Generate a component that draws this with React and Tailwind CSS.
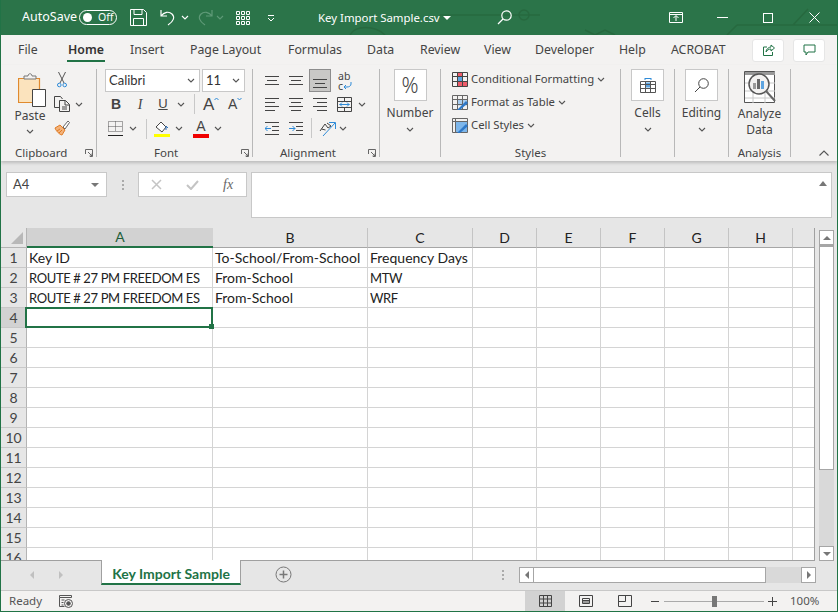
import React from 'react';

const COLS = ['A', 'B', 'C', 'D', 'E', 'F', 'G', 'H', ''];
const ROWS = Array.from({ length: 16 }, (_, i) => i + 1);
const CELLS = {
    1: ['Key ID', 'To-School/From-School', 'Frequency Days'],
    2: ['ROUTE # 27 PM FREEDOM ES', 'From-School', 'MTW'],
    3: ['ROUTE # 27 PM FREEDOM ES', 'From-School', 'WRF'],
};

function Chevron({ color = '#555', className = '' }) {
    return (
        <svg width="8" height="5" viewBox="0 0 8 5" className={className}>
            <path d="M1 1l3 3 3-3" fill="none" stroke={color} strokeWidth="1.1" />
        </svg>
    );
}

function Launcher() {
    return (
        <svg width="8" height="8" viewBox="0 0 8 8">
            <path d="M.5 5V.5h7V7.5H5M3 3l4 4M7 4.5V7H4.5" fill="none" stroke="#666" strokeWidth="1" />
        </svg>
    );
}

// alignment glyphs are just sets of horizontal bars
function Bars({ lines, children }) {
    return (
        <svg width="15" height="16" viewBox="0 0 15 16">
            {lines.map(([a, b, y], i) => (
                <path key={i} d={`M${a} ${y + 0.5}H${b}`} stroke="#444" strokeWidth="1" />
            ))}
            {children}
        </svg>
    );
}

function SaveIcon() {
    return (
        <svg width="17" height="17" viewBox="0 0 17 17" fill="none" stroke="#fff" strokeWidth="1">
            <path d="M.5.5h13l3 3v13H.5z" />
            <path d="M4 .5v5h8v-5M3.5 16.5v-7h10v7" />
        </svg>
    );
}

function UndoIcon({ color = '#fff', flip = false }) {
    return (
        <svg width="16" height="17" viewBox="0 0 16 17" fill="none" stroke={color} strokeWidth="1.2" className={flip ? '-scale-x-100' : ''}>
            <path d="M1 1v6h6M1 7c3-4 8-5 11-2 3 3 2 7-4 11" />
        </svg>
    );
}

function TitleBar() {
    return (
        <div className="relative flex h-[35px] shrink-0 items-center whitespace-nowrap bg-[#2b7449] text-[11.4px] text-white">
            {/* faint circuit pattern behind the title bar */}
            <svg className="absolute inset-0" width="838" height="35" fill="none" stroke="#27693f" strokeWidth="1.5">
                <path d="M440 15h100M737 25h101M727 35l10-10M793 25l15-16M585 30l10 5 10-5 10 5" />
                <circle cx="524" cy="15" r="5" />
                <path d="M350 35c5-10 25-10 35 0" />
            </svg>
            <span className="relative ml-[22px] w-[57px] text-[12.5px]">AutoSave</span>
            <div className="relative flex h-[15px] w-[38px] items-center rounded-full border border-white pl-[3px]">
                <span className="h-[9px] w-[9px] rounded-full bg-white" />
                <span className="ml-[6px] text-[10.5px] leading-none">Off</span>
            </div>
            <div className="relative ml-[13px]"><SaveIcon /></div>
            <div className="relative ml-[13px]"><UndoIcon /></div>
            <Chevron color="#fff" className="relative ml-[5px]" />
            <div className="relative ml-[8px]"><UndoIcon color="#5f9a78" flip /></div>
            <Chevron color="#5f9a78" className="relative ml-[3px]" />
            <svg className="relative ml-[12px]" width="14" height="14" viewBox="0 0 14 14" fill="none" stroke="#fff">
                <path d="M.5.5h3v3h-3zM5.5.5h3v3h-3zM10.5.5h3v3h-3zM.5 5.5h3v3h-3zM5.5 5.5h3v3h-3zM10.5 5.5h3v3h-3zM.5 10.5h3v3h-3zM5.5 10.5h3v3h-3zM10.5 10.5h3v3h-3z" />
            </svg>
            <svg className="relative ml-[17px]" width="8" height="8" viewBox="0 0 8 8" fill="none" stroke="#fff">
                <path d="M1 1.5h6M1 4l3 3 3-3" />
            </svg>
            <span className="relative ml-[43px] w-[125px]">Key Import Sample.csv</span>
            <span className="relative h-0 w-0 border-x-[4px] border-t-[4px] border-x-transparent border-t-white" />
            <svg className="relative ml-[46px]" width="15" height="15" viewBox="0 0 15 15" fill="none" stroke="#fff" strokeWidth="1.2">
                <circle cx="9.5" cy="5.5" r="4.7" />
                <path d="M6 9l-5 5" />
            </svg>
            <svg className="relative ml-[157px]" width="14" height="11" viewBox="0 0 14 11" fill="none" stroke="#fff">
                <path d="M.5.5h13v10H.5zM.5 2.5h13M7 9V4M4.5 6L7 3.5 9.5 6" />
            </svg>
            <span className="relative ml-[34px] h-px w-[11px] bg-white" />
            <span className="relative ml-[35px] h-[10px] w-[10px] border border-white" />
            <svg className="relative ml-[36px]" width="11" height="11" viewBox="0 0 11 11" stroke="#fff">
                <path d="M.5.5l10 10M10.5.5l-10 10" />
            </svg>
        </div>
    );
}

function TabBar() {
    const tabs = [
        ['File', 'w-[50px]'], ['Home', 'w-[62px]'], ['Insert', 'w-[60px]'], ['Page Layout', 'w-[98px]'],
        ['Formulas', 'w-[79px]'], ['Data', 'w-[53px]'], ['Review', 'w-[64px]'], ['View', 'w-[51px]'],
        ['Developer', 'w-[84px]'], ['Help', 'w-[52px]'], ['ACROBAT', 'w-[70px]'],
    ];
    return (
        <div className="flex h-[30px] shrink-0 items-center whitespace-nowrap bg-[#f3f2f1] pl-[17px] text-[12.3px] text-[#444]">
            {tabs.map(([t, w]) => (
                <div key={t} className={w}>
                    {t === 'Home' ? (
                        <span className="-ml-px inline-flex h-[24px] items-center border-b-2 border-[#217346] px-px pt-[2px] font-semibold text-[#333]">{t}</span>
                    ) : (
                        t
                    )}
                </div>
            ))}
            <div className="ml-auto mr-[12px] flex gap-[9px]">
                <button className="flex h-[23px] w-[32px] items-center justify-center rounded-[3px] border border-[#e6e6e6] bg-white">
                    <svg width="13" height="13" viewBox="0 0 13 13" fill="none" stroke="#217346">
                        <path d="M5 3H1.5v8.5h9V8M4 8c0-3 3-5 5-5V1l3.5 3L9 7V5C7 5 5 6 4 8z" />
                    </svg>
                </button>
                <button className="flex h-[23px] w-[32px] items-center justify-center rounded-[3px] border border-[#e6e6e6] bg-white">
                    <svg width="13" height="12" viewBox="0 0 13 12" fill="none" stroke="#217346">
                        <path d="M1 1h11v7H5l-2 3V8H1z" />
                    </svg>
                </button>
            </div>
        </div>
    );
}

function Group({ label, className, labelClass = 'justify-center', launcher, children }) {
    return (
        <div className={`relative flex h-[88px] shrink-0 flex-col border-r border-[#b8b8b8] ${className}`}>
            <div className="flex-1">{children}</div>
            <div className={`flex h-[8px] items-center text-[11.5px] leading-none text-[#444] ${labelClass}`}>
                <span>{label}</span>
            </div>
            {launcher && <div className="absolute bottom-0 right-[3px]"><Launcher /></div>}
        </div>
    );
}

function ClipboardGroup() {
    return (
        <Group label="Clipboard" launcher className="w-[96px]" labelClass="pl-[14px]">
            <div className="flex pl-[12px]">
                <div className="flex w-[34px] flex-col items-center pt-[4px] text-[12px] leading-none text-[#444]">
                    <svg className="ml-[4px]" width="28" height="34" viewBox="0 0 28 34" fill="none">
                        <path d="M.5 5.5h21v24H.5z" fill="#fbe3bd" stroke="#e08a2e" strokeWidth="1.2" />
                        <path d="M6 6V3h4c0-3 4-3 4 0h4v3z" fill="#f3f2f1" stroke="#777" />
                        <path d="M14.5 16.5h13v17h-13z" fill="#fff" stroke="#444" />
                    </svg>
                    <span className="mt-[3px]">Paste</span>
                    <Chevron className="mt-[7px]" />
                </div>
                <div className="ml-[7px] flex flex-col gap-[8px] pt-[3px]">
                    <svg className="ml-[3px]" width="10" height="16" viewBox="0 0 10 16" fill="none">
                        <path d="M1.5 0l5.5 11M8.500 0L3 11" stroke="#555" />
                        <circle cx="2.300" cy="13" r="1.800" stroke="#2e8bd8" />
                        <circle cx="7.700" cy="13" r="1.800" stroke="#2e8bd8" />
                    </svg>
                    <div className="flex items-center">
                        <svg width="16" height="16" viewBox="0 0 16 16" fill="none" stroke="#444">
                            <path d="M5 11.500H.5V.5h6l2 2.500" />
                            <path d="M5.500 4.500h6l4 4v7h-10zM11 4.500v4.500h4.500M8 11h5M8 13h5" />
                        </svg>
                        <Chevron className="ml-[5px]" />
                    </div>
                    <svg width="16" height="16" viewBox="0 0 16 16" fill="none">
                        <path d="M1 8l5-3 5 5-3 5c-2 0-6-4-7-7z" fill="#f3b27a" stroke="#e07b24" />
                        <path d="M3 11l3-2M5 13l3-3" stroke="#e07b24" />
                        <path d="M9 7l5-6 1.500 1.500L11 9z" fill="#fff" stroke="#666" />
                    </svg>
                </div>
            </div>
        </Group>
    );
}

function FontGroup() {
    return (
        <Group label="Font" launcher className="w-[156px]" labelClass="pl-[57px]">
            <div className="flex gap-[2px] pl-[8px] font-['Lato',sans-serif] text-[13px] text-[#333]">
                <div className="flex h-[23px] w-[95px] items-center justify-between border border-[#c8c8c8] bg-white pl-[3px] pr-[4px]">
                    Calibri <Chevron />
                </div>
                <div className="flex h-[23px] w-[43px] items-center justify-between border border-[#c8c8c8] bg-white pl-[3px] pr-[4px]">
                    11 <Chevron />
                </div>
            </div>
            <div className="flex h-[24px] items-center pl-[8px] font-['Liberation_Serif',serif] text-[#444]">
                <span className="w-[22px] text-center font-['Liberation_Sans',sans-serif] text-[14px] font-bold">B</span>
                <span className="w-[26px] text-center text-[14px] italic">I</span>
                <span className="w-[20px] text-center font-['Liberation_Sans',sans-serif] text-[13px] underline">U</span>
                <span className="flex w-[16px] justify-center"><Chevron /></span>
                <span className="ml-[5px] h-[20px] w-px bg-[#c8c8c8]" />
                <span className="ml-[8px] flex w-[22px] items-start font-['Liberation_Sans',sans-serif] text-[17px] leading-none">
                    A
                    <svg className="mt-[1px]" width="5" height="3" viewBox="0 0 5 3" fill="none" stroke="#2e8bd8"><path d="M.5 3l2-2 2 2" /></svg>
                </span>
                <span className="ml-[3px] flex w-[22px] items-start font-['Liberation_Sans',sans-serif] text-[14px] leading-none">
                    A
                    <svg className="mt-[1px]" width="5" height="3" viewBox="0 0 5 3" fill="none" stroke="#2e8bd8"><path d="M.5 0l2 2 2-2" /></svg>
                </span>
            </div>
            <div className="flex h-[25px] items-center pl-[11px]">
                <svg width="15" height="15" viewBox="0 0 15 15" fill="none">
                    <path d="M.5.500h14v10h-14zM7.500.500v10M.5 5.500h14" stroke="#555" strokeDasharray="1 1" />
                    <path d="M0 14.500h15" stroke="#222" />
                </svg>
                <span className="flex w-[20px] justify-center"><Chevron /></span>
                <span className="ml-[3px] h-[20px] w-px bg-[#c8c8c8]" />
                <svg className="ml-[7px]" width="16" height="16" viewBox="0 0 16 16" fill="none">
                    <path d="M2 6l5-5 5 5-4 5z" stroke="#444" fill="#fff" />
                    <path d="M12 9V5l2 2" stroke="#2e6fb8" />
                    <path d="M0 13h16v3H0z" fill="#ffff00" />
                </svg>
                <span className="flex w-[18px] justify-center"><Chevron /></span>
                <span className="ml-[5px] flex w-[16px] flex-col items-center">
                    <span className="font-['Liberation_Sans',sans-serif] text-[14px] leading-[13px] text-[#444]">A</span>
                    <span className="mt-[1px] h-[4px] w-[16px] bg-[#f00000]" />
                </span>
                <span className="flex w-[18px] justify-center"><Chevron /></span>
            </div>
        </Group>
    );
}

function AlignmentGroup() {
    return (
        <Group label="Alignment" launcher className="w-[127px]" labelClass="pl-[27px]">
            <div className="flex h-[23px] items-center pl-[12px]">
                <Bars lines={[[0, 14, 3], [2, 12, 7], [0, 14, 11]]} />
                <div className="ml-[9px]"><Bars lines={[[0, 14, 3], [2, 12, 7], [0, 14, 11]]} /></div>
                <div className="ml-[5px] flex h-[23px] w-[22px] items-center justify-center border border-[#8d8d8d] bg-[#c9c8c6]">
                    <Bars lines={[[0, 14, 6], [2, 12, 10], [0, 14, 14]]} />
                </div>
                <div className="ml-[7px] flex w-[16px] flex-col text-[10.5px] leading-[10px] text-[#444]">
                    <span>ab</span>
                    <div className="flex items-center">
                        <span>c</span>
                        <svg width="9" height="7" viewBox="0 0 9 7" fill="none" stroke="#2e8bd8"><path d="M8 0v2c0 2-2 3-4 3H1M3 3L1 5l2 2" /></svg>
                    </div>
                </div>
            </div>
            <div className="flex h-[24px] items-center pl-[12px]">
                <Bars lines={[[0, 14, 2], [0, 10, 6], [0, 14, 10], [0, 10, 14]]} />
                <div className="ml-[9px]"><Bars lines={[[0, 14, 2], [2, 12, 6], [0, 14, 10], [2, 12, 14]]} /></div>
                <div className="ml-[9px]"><Bars lines={[[0, 14, 2], [4, 14, 6], [0, 14, 10], [4, 14, 14]]} /></div>
                <svg className="ml-[9px]" width="15" height="15" viewBox="0 0 15 15" fill="none">
                    <path d="M.5.5h14v14H.5zM.5 4.500h14M.5 10.500h14M7.500.5v4M7.500 10.500v4" stroke="#444" />
                    <path d="M2.500 7.500h10M5 5.500l-2 2 2 2M10 5.500l2 2-2 2" stroke="#2e8bd8" />
                </svg>
                <Chevron className="ml-[6px]" />
            </div>
            <div className="flex h-[24px] items-center pl-[12px]">
                <Bars lines={[[0, 14, 2], [7, 14, 6], [7, 14, 10], [0, 14, 14]]}>
                    <path d="M0 8.500h6M2.500 6L0 8.500 2.500 11" fill="none" stroke="#2e8bd8" />
                </Bars>
                <div className="ml-[9px]">
                    <Bars lines={[[0, 14, 2], [7, 14, 6], [7, 14, 10], [0, 14, 14]]}>
                        <path d="M0 8.500h6M3.500 6L6 8.500 3.500 11" fill="none" stroke="#2e8bd8" />
                    </Bars>
                </div>
                <span className="ml-[7px] h-[20px] w-px bg-[#c8c8c8]" />
                <svg className="ml-[7px]" width="18" height="17" viewBox="0 0 18 17" fill="none">
                    <path d="M1 11l5-7 3 4M2.500 9l4 1" stroke="#444" />
                    <path d="M8 3l4 3-3 2" stroke="#444" />
                    <path d="M4 16L16 3M10 2.500h6.500V9" stroke="#2e8bd8" />
                </svg>
                <Chevron className="ml-[2px]" />
            </div>
        </Group>
    );
}

function BigButton({ label, children, className }) {
    return (
        <Group label="" className={className}>
            <div className="flex flex-col items-center text-[12px] leading-none text-[#444]">
                <div className="flex h-[32px] w-[33px] items-center justify-center border border-[#c8c8c8] bg-white">{children}</div>
                <span className="mt-[6px]">{label}</span>
                <Chevron className="mt-[8px]" />
            </div>
        </Group>
    );
}

function StyleRow({ children, label }) {
    return (
        <div className="flex h-[23px] items-center text-[11.3px] text-[#444]">
            <div className="h-[15px] w-[16px]">{children}</div>
            <span className="ml-[3px]">{label}</span>
            <Chevron className="ml-[3px]" />
        </div>
    );
}

function StylesGroup() {
    const grid = 'M.5.5h15v14H.5zM.5 4.500h15M.5 9.500h15M5.500.5v14M10.500.5v14';
    return (
        <Group label="Styles" className="w-[180px]">
            <div className="-mt-px pl-[11px]">
                <StyleRow label="Conditional Formatting">
                    <svg width="16" height="15" viewBox="0 0 16 15" fill="none">
                        <path d="M5.500.5h5v4h-5zM5.500 9.500h10v5h-10z" fill="#ee5c6a" />
                        <path d="M5.500 4.500h5v5h-5z" fill="#5da4e0" />
                        <path d={grid} stroke="#444" />
                    </svg>
                </StyleRow>
                <StyleRow label="Format as Table">
                    <svg width="16" height="15" viewBox="0 0 16 15" fill="none">
                        <path d="M5.500 4.500h10v6h-10z" fill="#a9cdef" />
                        <path d={grid} stroke="#666" />
                        <path d="M5 15l9-9 2 2-8 7z" fill="#2e78c8" />
                    </svg>
                </StyleRow>
                <StyleRow label="Cell Styles">
                    <svg width="16" height="15" viewBox="0 0 16 15" fill="none">
                        <path d="M3.500 3.500h12v11h-12z" fill="#7db6ea" />
                        <path d="M.5.5h15v14H.5zM.5 3.500h15M3.500.5v14" stroke="#666" />
                        <path d="M5 15l9-9 2 2-8 7z" fill="#2e78c8" />
                    </svg>
                </StyleRow>
            </div>
        </Group>
    );
}

function AnalyzeGroup() {
    return (
        <Group label="Analysis" className="w-[62px]">
            <div className="flex flex-col items-center pt-[2px] text-[12px] leading-[16px] text-[#444]">
                <svg width="32" height="32" viewBox="0 0 32 32" fill="none">
                    <path d="M.5.5h30v31H.5z" fill="#fff" stroke="#555" />
                    <path d="M1 1h30v3H1z" fill="#999" />
                    <path d="M1 12h30M1 20h30M1 27h30M9 4v28M21 4v28" stroke="#c8c8c8" />
                    <circle cx="15" cy="13" r="10" fill="#f3f2f1" stroke="#555" strokeWidth="1.5" />
                    <path d="M9 12h3v6H9z" fill="#9a9a9a" />
                    <path d="M13 8h3v10h-3z" fill="#6a6a6a" />
                    <path d="M17 10h3v8h-3z" fill="#5da4e0" />
                    <path d="M22 20l9 10" stroke="#666" strokeWidth="2" />
                </svg>
                <span className="mt-[3px]">Analyze</span>
                <span>Data</span>
            </div>
        </Group>
    );
}

function Ribbon() {
    return (
        <div className="relative z-10 flex h-[96px] shrink-0 bg-[#f3f2f1] pt-[4px] shadow-[0_2px_3px_rgba(0,0,0,0.18)]">
            <ClipboardGroup />
            <FontGroup />
            <AlignmentGroup />
            <BigButton label="Number" className="w-[61px]">
                <span className="text-[21px] font-light leading-none text-[#444]">%</span>
            </BigButton>
            <StylesGroup />
            <BigButton label="Cells" className="w-[54px]">
                <svg width="16" height="15" viewBox="0 0 16 15" fill="none">
                    <path d="M5.500 4.500h5v5h-5z" fill="#5da4e0" />
                    <path d="M.5 3.500h15v11H.5zM.5 6.500h15M.5 10.500h15M5.500 3.500v11M10.500 3.500v11" stroke="#555" />
                    <path d="M5 .5h6M5 0v2M11 0v2" stroke="#2e8bd8" />
                </svg>
            </BigButton>
            <BigButton label="Editing" className="w-[54px]">
                <svg width="15" height="15" viewBox="0 0 15 15" fill="none" stroke="#444">
                    <circle cx="9.500" cy="5.500" r="4.800" />
                    <path d="M6 9l-5 5" />
                </svg>
            </BigButton>
            <AnalyzeGroup />
            <div className="flex flex-1 items-end justify-end pb-[5px] pr-[8px]">
                <svg width="10" height="6" viewBox="0 0 10 6" fill="none" stroke="#555" strokeWidth="1.100">
                    <path d="M.5 5.500l4.500-4.500 4.500 4.500" />
                </svg>
            </div>
        </div>
    );
}

function FormulaBar() {
    return (
        <div className="flex h-[67px] shrink-0 items-start bg-[#e6e6e6] pt-[11px] font-['Lato',sans-serif]">
            <div className="ml-[5px] flex h-[25px] w-[101px] items-center justify-between border border-[#c8c8c8] bg-white pl-[6px] pr-[7px] text-[13px] text-[#444]">
                A4
                <span className="h-0 w-0 border-x-[4px] border-t-[4px] border-x-transparent border-t-[#777]" />
            </div>
            <div className="ml-[15px] mt-[8px] flex flex-col gap-[2px]">
                <span className="h-[2px] w-[2px] bg-[#aaa]" />
                <span className="h-[2px] w-[2px] bg-[#aaa]" />
                <span className="h-[2px] w-[2px] bg-[#aaa]" />
            </div>
            <div className="ml-[14px] flex h-[25px] w-[109px] items-center border border-[#c8c8c8] bg-white">
                <svg className="ml-[12px]" width="11" height="11" viewBox="0 0 11 11" stroke="#c4c4c4" strokeWidth="1.500">
                    <path d="M1 1l9 9M10 1l-9 9" />
                </svg>
                <svg className="ml-[24px]" width="13" height="10" viewBox="0 0 13 10" fill="none" stroke="#c4c4c4" strokeWidth="2">
                    <path d="M1 5l4 4 7-8" />
                </svg>
                <span className="ml-[24px] font-['Liberation_Serif',serif] text-[14px] italic leading-none text-[#666]">fx</span>
            </div>
            <div className="ml-[4px] flex h-[46px] w-[581px] justify-end border border-[#c8c8c8] bg-white pr-[4px] pt-[8px]">
                <span className="h-0 w-0 border-x-[4px] border-b-[5px] border-x-transparent border-b-[#777]" />
            </div>
        </div>
    );
}

function Grid() {
    const cols = 'grid grid-cols-[26px_186px_155px_105px_64px_64px_64px_64px_64px_22px] grid-rows-[20px]';
    return (
        <div className="h-[333px] w-[814px] overflow-hidden border-b border-r border-[#a0a0a0] font-['Lato',sans-serif] text-[14px] leading-none text-[#222]">
            <div className={cols}>
                <div className="relative border-b border-r border-[#b4b4b4]">
                    <span className="absolute bottom-[3px] right-[3px] h-0 w-0 border-b-[12px] border-l-[12px] border-b-[#b8b8b8] border-l-transparent" />
                </div>
                {COLS.map((c, i) =>
                    i === 0 ? (
                        <div key={i} className="flex items-center justify-center border-b-2 border-[#217346] bg-[#d2d2d2] text-[#1f5e3a]">{c}</div>
                    ) : (
                        <div key={i} className="flex items-center justify-center border-b border-r border-b-[#a6a6a6] border-r-[#c4c4c4]">{c}</div>
                    )
                )}
            </div>
            {ROWS.map((r) => (
                <div key={r} className={cols}>
                    <div className={`flex items-center justify-center border-b border-r border-b-[#c8c8c8] border-r-[#b4b4b4] text-[#444] ${r === 4 ? 'bg-[#d2d2d2] text-[#1f5e3a]' : ''}`}>{r}</div>
                    {COLS.map((c, i) => {
                        const text = CELLS[r]?.[i];
                        // Calibri capitals run narrower than Lato's
                        const caps = text && text === text.toUpperCase();
                        return (
                            <div key={c + i} className={`relative flex items-center whitespace-nowrap border-b border-r border-[#d4d4d4] bg-white pl-[2px] ${i === 8 ? 'border-r-0' : ''}`}>
                                <span className={caps ? 'mt-[2px] text-[13px] tracking-[-0.38px]' : ''}>{text}</span>
                                {r === 4 && i === 0 && (
                                    <span className="absolute -left-[2px] -top-[1px] z-10 h-[21px] w-[188px] border-2 border-[#217346]">
                                        <span className="absolute -bottom-[3px] -right-[3px] h-[5px] w-[5px] bg-[#217346]" />
                                    </span>
                                )}
                            </div>
                        );
                    })}
                </div>
            ))}
        </div>
    );
}

function VerticalScroll() {
    return (
        <div className="ml-[4px] mt-[2px] flex h-[331px] w-[15px] flex-col">
            <div className="flex h-[15px] items-center justify-center border border-[#a6a6a6] bg-white">
                <span className="h-0 w-0 border-x-[4px] border-b-[4px] border-x-transparent border-b-[#777]" />
            </div>
            <div className="h-[225px] border-x border-b border-t-2 border-[#a6a6a6] bg-white" />
            <div className="flex-1 bg-[#d9d9d9]" />
            <div className="flex h-[15px] items-center justify-center border border-[#a6a6a6] bg-white">
                <span className="h-0 w-0 border-x-[4px] border-t-[4px] border-x-transparent border-t-[#777]" />
            </div>
        </div>
    );
}

function SheetTabs() {
    return (
        <div className="flex h-[29px] shrink-0 items-start bg-[#e6e6e6] font-['Lato',sans-serif]">
            <span className="ml-[29px] mt-[10px] h-0 w-0 border-y-[4px] border-r-[4px] border-y-transparent border-r-[#c0c0c0]" />
            <span className="ml-[25px] mt-[10px] h-0 w-0 border-y-[4px] border-l-[4px] border-y-transparent border-l-[#c0c0c0]" />
            <div className="ml-[38px] -mt-px flex h-[25px] w-[140px] items-center justify-center border-x border-[#a0a0a0] border-b-2 border-b-[#217346] bg-white pt-[3px] text-[14px] font-bold text-[#217346]">
                Key Import Sample
            </div>
            <svg className="ml-[34px] mt-[5px]" width="17" height="17" viewBox="0 0 17 17" fill="none" stroke="#777">
                <circle cx="8.500" cy="8.500" r="7.500" />
                <path d="M8.500 4.500v8M4.500 8.500h8" strokeWidth="1.500" />
            </svg>
            <div className="ml-[210px] mt-[9px] flex flex-col gap-[2px]">
                <span className="h-[2px] w-[2px] bg-[#aaa]" />
                <span className="h-[2px] w-[2px] bg-[#aaa]" />
                <span className="h-[2px] w-[2px] bg-[#aaa]" />
            </div>
            <div className="ml-[15px] mt-[6px] flex h-[16px] w-[297px] bg-[#d9d9d9]">
                <div className="flex w-[15px] items-center justify-center border border-[#a6a6a6] bg-white">
                    <span className="h-0 w-0 border-y-[4px] border-r-[4px] border-y-transparent border-r-[#777]" />
                </div>
                <div className="w-[232px] border-y border-r border-[#a6a6a6] bg-white" />
                <div className="flex-1" />
                <div className="flex w-[15px] items-center justify-center border border-[#a6a6a6] bg-white">
                    <span className="h-0 w-0 border-y-[4px] border-l-[4px] border-y-transparent border-l-[#777]" />
                </div>
            </div>
        </div>
    );
}

function StatusBar() {
    return (
        <div className="flex h-[21px] shrink-0 items-center border-t border-[#c8c8c8] bg-[#f3f2f1] text-[11.5px] text-[#555]">
            <span className="ml-[8px] w-[50px]">Ready</span>
            <svg width="14" height="13" viewBox="0 0 14 13" fill="none" stroke="#555">
                <path d="M.5.5h12v2H.5zM.5 2.500v9h5M2.500 5h3M2.500 7.500h2M2.500 10h2" />
                <circle cx="9.500" cy="8.500" r="4" />
                <circle cx="9.500" cy="8.500" r="1.800" fill="#555" />
            </svg>
            <div className="ml-[452px] flex h-full w-[40px] items-center justify-center bg-[#d2d2d2]">
                <svg width="13" height="12" viewBox="0 0 13 12" fill="none" stroke="#444">
                    <path d="M.5.5h12v11H.5zM.5 4h12M.5 8h12M4.500.5v11M8.500.5v11" />
                </svg>
            </div>
            <svg className="ml-[14px]" width="14" height="12" viewBox="0 0 14 12" fill="none" stroke="#444">
                <path d="M.5.5h13v11H.5zM3.500 3.500h7v5h-7zM4 5.500h6M4 7h6" />
            </svg>
            <svg className="ml-[25px]" width="14" height="12" viewBox="0 0 14 12" fill="none" stroke="#444">
                <path d="M.5.5h13v11H.5zM.5 6.500h7v-6" />
            </svg>
            <span className="ml-[19px] h-px w-[8px] bg-[#444]" />
            <div className="relative ml-[5px] flex h-full w-[100px] items-center">
                <span className="h-px w-full bg-[#aaa]" />
                <span className="absolute left-[48px] h-[11px] w-[5px] bg-[#777]" />
            </div>
            <span className="relative ml-[4px] flex h-[9px] w-[9px] items-center">
                <span className="h-px w-full bg-[#444]" />
                <span className="absolute left-[4px] h-full w-px bg-[#444]" />
            </span>
            <span className="ml-[13px]">100%</span>
        </div>
    );
}

export default function App() {
    return (
        <div className="flex h-[612px] w-[838px] flex-col overflow-hidden border-x border-b border-[#217346] bg-[#e6e6e6] font-['Noto_Sans',sans-serif]">
            <div className="-mx-px"><TitleBar /></div>
            <TabBar />
            <Ribbon />
            <FormulaBar />
            <div className="flex h-[333px] shrink-0">
                <Grid />
                <VerticalScroll />
            </div>
            <SheetTabs />
            <StatusBar />
        </div>
    );
}
